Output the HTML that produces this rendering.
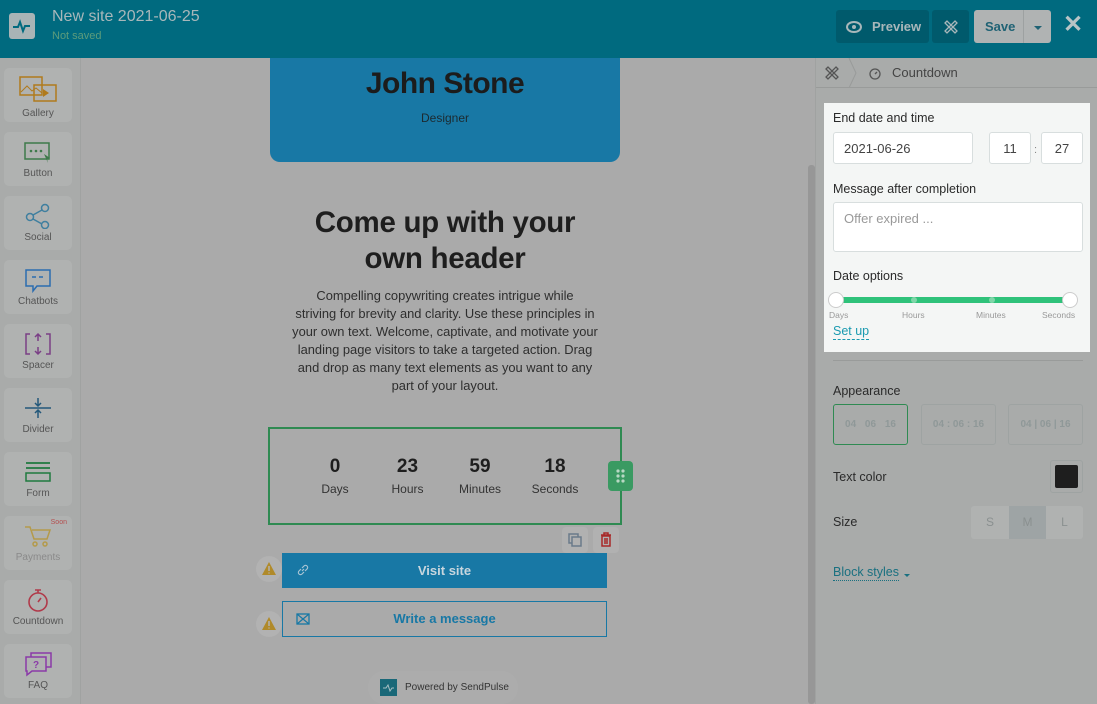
<!DOCTYPE html>
<html><head><meta charset="utf-8"><style>
*{box-sizing:border-box;margin:0;padding:0}
body{width:1097px;height:704px;overflow:hidden;background:#aaaaaa;font-family:"Liberation Sans",sans-serif;position:relative}
.abs{position:absolute}
.hdr{left:0;top:0;width:1097px;height:58px;background:#006a7f}
.side{left:0;top:58px;width:81px;height:646px;background:#a9abaa;border-right:1px solid #a0a2a1}
.item{position:absolute;left:4px;width:68px;height:54px;background:#b0b2b1;border-radius:5px;text-align:center;font-size:10px;color:#555}
.item svg{display:block;margin:7px auto 3px}
.rp{left:815px;top:58px;width:282px;height:646px;background:#a9abaa;border-left:1px solid #a0a2a1}
.lbl{font-size:12.5px;color:#2a2a2a}
.inp{position:absolute;background:#fff;border:1px solid #d8dede;border-radius:3px;font-size:13px;color:#444}
.btn{position:absolute;border-radius:3px}
</style></head><body>
<div class="abs hdr">
 <div class="abs" style="left:9px;top:13px;width:26px;height:26px;background:#a9b4b6;border-radius:3px"><svg width="26" height="26"><path d="M4 14h5l2-5 3 9 2-5h5" stroke="#006a7f" stroke-width="2" fill="none"/></svg></div>
 <div class="abs" style="left:52px;top:8px;font-size:16px;color:#a8b7ba">New site 2021-06-25</div>
 <div class="abs" style="left:52px;top:30px;font-size:11px;color:#5c9c7c">Not saved</div>
 <div class="btn" style="left:836px;top:10px;width:93px;height:33px;background:#005a6c"><svg class="abs" style="left:10px;top:11px" width="16" height="12"><ellipse cx="8" cy="6" rx="7" ry="5" fill="none" stroke="#a8b7ba" stroke-width="2"/><circle cx="8" cy="6" r="2" fill="#a8b7ba"/></svg><span class="abs" style="left:36px;top:9px;font-size:13px;font-weight:bold;color:#a8b7ba">Preview</span></div>
 <div class="btn" style="left:932px;top:10px;width:37px;height:33px;background:#005a6c"><svg class="abs" style="left:11px;top:9px" width="16" height="16"><path d="M2 4l2-2 10 10-2 2zM12 2l2 2-10 10-2-2z" fill="none" stroke="#a8b7ba" stroke-width="1.3"/></svg></div>
 <div class="btn" style="left:974px;top:10px;width:77px;height:33px;background:#b0b3b3"><span class="abs" style="left:11px;top:9px;font-size:13px;font-weight:bold;color:#1f6274">Save</span><div class="abs" style="left:49px;top:0;width:1px;height:33px;background:#9da1a1"></div><div class="abs" style="left:60px;top:16px;border:4px solid transparent;border-top:4px solid #1f6274;border-bottom:0"></div></div>
 <div class="abs" style="left:1063px;top:10px;font-size:24px;color:#b8c4c6;font-weight:bold">✕</div>
</div>
<div class="abs side">
 <div class="item" style="top:10px"><svg width="40" height="30"><rect x="2" y="2" width="22" height="18" fill="none" stroke="#b07a1c" stroke-width="1.5"/><path d="M3 17l6-6 5 5 4-3 6 5" stroke="#b07a1c" fill="none"/><rect x="16" y="10" width="22" height="16" fill="none" stroke="#b07a1c" stroke-width="1.5"/><path d="M25 14l6 4-6 4z" fill="#b07a1c"/></svg>Gallery</div>
 <div class="item" style="top:74px"><svg width="30" height="26"><rect x="2" y="4" width="24" height="16" fill="none" stroke="#3e7a4a" stroke-width="1.5"/><circle cx="8" cy="12" r="1.3" fill="#3e7a4a"/><circle cx="13" cy="12" r="1.3" fill="#3e7a4a"/><circle cx="18" cy="12" r="1.3" fill="#3e7a4a"/><path d="M21 15l6 4-3 1 1 4z" fill="#3e7a4a"/></svg>Button</div>
 <div class="item" style="top:138px"><svg width="30" height="26"><circle cx="7" cy="14" r="3.5" fill="none" stroke="#3f7f9f" stroke-width="1.5"/><circle cx="22" cy="5" r="3.5" fill="none" stroke="#3f7f9f" stroke-width="1.5"/><circle cx="22" cy="22" r="3.5" fill="none" stroke="#3f7f9f" stroke-width="1.5"/><path d="M10 12l9-5M10 16l9 5" stroke="#3f7f9f" stroke-width="1.5"/></svg>Social</div>
 <div class="item" style="top:202px"><svg width="30" height="26"><path d="M3 3h24v16H14l-4 5v-5H3z" fill="none" stroke="#2b6cb0" stroke-width="1.5"/><path d="M9 10h4M16 10h4" stroke="#2b6cb0" stroke-width="1.5"/></svg>Chatbots</div>
 <div class="item" style="top:266px"><svg width="30" height="26"><path d="M7 3H3v20h4M23 3h4v20h-4" fill="none" stroke="#7a3f86" stroke-width="1.5"/><path d="M15 3v7M15 16v7M12 6l3-3 3 3M12 20l3 3 3-3" stroke="#7a3f86" stroke-width="1.5" fill="none"/></svg>Spacer</div>
 <div class="item" style="top:330px"><svg width="30" height="26"><path d="M2 13h26" stroke="#23587a" stroke-width="1.5"/><path d="M15 3v8M15 15v8M12 8l3 3 3-3M12 18l3-3 3 3" stroke="#23587a" stroke-width="1.5" fill="none"/></svg>Divider</div>
 <div class="item" style="top:394px"><svg width="30" height="26"><path d="M3 4h24M3 9h24" stroke="#1f7a3f" stroke-width="1.8"/><rect x="3" y="14" width="24" height="8" fill="none" stroke="#1f7a3f" stroke-width="1.5"/></svg>Form</div>
 <div class="item" style="top:458px;color:#8a8a8a"><span class="abs" style="right:5px;top:3px;font-size:7px;color:#b45050">Soon</span><svg width="30" height="26"><path d="M2 4h5l4 12h13l3-9H9" fill="none" stroke="#b49a4a" stroke-width="1.5"/><circle cx="12" cy="21" r="2" fill="none" stroke="#b49a4a" stroke-width="1.5"/><circle cx="22" cy="21" r="2" fill="none" stroke="#b49a4a" stroke-width="1.5"/></svg>Payments</div>
 <div class="item" style="top:522px"><svg width="30" height="26"><circle cx="15" cy="15" r="9" fill="none" stroke="#b03a4a" stroke-width="1.6"/><path d="M12 3h6M15 3v3M15 15l3-4" stroke="#b03a4a" stroke-width="1.6"/></svg>Countdown</div>
 <div class="item" style="top:586px"><svg width="30" height="26"><rect x="8" y="2" width="20" height="14" fill="none" stroke="#8a3aa8" stroke-width="1.5"/><path d="M3 6h20v14H9l-5 4v-4H3z" fill="#b0b2b1" stroke="#8a3aa8" stroke-width="1.5"/><text x="10" y="17" font-size="10" font-weight="bold" fill="#8a3aa8">?</text></svg>FAQ</div>
</div>
<!-- canvas -->
<div class="abs" style="left:808px;top:165px;width:7px;height:539px;background:#979797;border-radius:3px"></div>
<div class="abs" style="left:270px;top:58px;width:350px;height:104px;background:#1878a5;border-radius:0 0 10px 10px;text-align:center">
 <div style="font-size:30px;font-weight:bold;color:#1c1c1c;margin-top:9px;letter-spacing:-0.5px">John Stone</div>
 <div style="font-size:12px;color:#1c2a30;margin-top:10px">Designer</div>
</div>
<div class="abs" style="left:250px;top:205px;width:390px;text-align:center;font-size:29.5px;font-weight:bold;color:#1e1e1e;line-height:36px;letter-spacing:-0.3px">Come up with your<br>own header</div>
<div class="abs" style="left:250px;top:287px;width:390px;text-align:center;font-size:12.9px;color:#2e2e2e;line-height:18px">Compelling copywriting creates intrigue while<br>striving for brevity and clarity. Use these principles in<br>your own text. Welcome, captivate, and motivate your<br>landing page visitors to take a targeted action. Drag<br>and drop as many text elements as you want to any<br>part of your layout.</div>
<div class="abs" style="left:268px;top:427px;width:354px;height:98px;border:2px solid #2f8a52"></div>
<div class="abs" style="left:300px;top:456px;width:300px;display:flex;text-align:center;color:#1e1e1e">
 <div style="width:70px"><div style="font-size:19px;font-weight:bold">0</div><div style="font-size:12px;margin-top:4px;color:#333">Days</div></div>
 <div style="width:75px"><div style="font-size:19px;font-weight:bold">23</div><div style="font-size:12px;margin-top:4px;color:#333">Hours</div></div>
 <div style="width:70px"><div style="font-size:19px;font-weight:bold">59</div><div style="font-size:12px;margin-top:4px;color:#333">Minutes</div></div>
 <div style="width:80px"><div style="font-size:19px;font-weight:bold">18</div><div style="font-size:12px;margin-top:4px;color:#333">Seconds</div></div>
</div>
<div class="abs" style="left:608px;top:461px;width:25px;height:30px;background:#3a9a62;border-radius:4px"><svg width="25" height="30"><g fill="#b8d8c4"><circle cx="10" cy="10" r="1.6"/><circle cx="15" cy="10" r="1.6"/><circle cx="10" cy="15" r="1.6"/><circle cx="15" cy="15" r="1.6"/><circle cx="10" cy="20" r="1.6"/><circle cx="15" cy="20" r="1.6"/></g></svg></div>
<div class="abs" style="left:562px;top:527px;width:26px;height:26px;background:#b1b1b1;border-radius:4px"><svg width="26" height="26"><rect x="7" y="7" width="9" height="9" fill="none" stroke="#6a7a8a" stroke-width="1.5"/><rect x="10" y="10" width="9" height="9" fill="#b1b1b1" stroke="#6a7a8a" stroke-width="1.5"/></svg></div>
<div class="abs" style="left:593px;top:527px;width:26px;height:26px;background:#b1b1b1;border-radius:4px"><svg width="26" height="26"><path d="M8 8h10M11 8V6h4v2M9 9h8v10H9zM12 11v6M14 11v6" stroke="#a82828" stroke-width="1.5" fill="none"/></svg></div>
<div class="abs" style="left:282px;top:553px;width:325px;height:35px;background:#1878a5;text-align:center;line-height:35px;font-size:13px;font-weight:bold;color:#c8d6de">Visit site</div>
<svg class="abs" style="left:296px;top:563px" width="14" height="14"><path d="M6 8l2-2M5 6L3 8a2 2 0 0 0 3 3l2-2M9 8l2-2a2 2 0 0 0-3-3L6 5" stroke="#a8c4d4" stroke-width="1.2" fill="none"/></svg>
<div class="abs" style="left:282px;top:601px;width:325px;height:36px;border:1px solid #1878a5;text-align:center;line-height:34px;font-size:13px;font-weight:bold;color:#1878a5">Write a message</div>
<svg class="abs" style="left:296px;top:613px" width="14" height="12"><rect x="1" y="1" width="12" height="10" fill="none" stroke="#1878a5" stroke-width="1.3"/><path d="M1 1l12 10M13 1L1 11" stroke="#1878a5" stroke-width="1.2"/></svg>
<div class="abs" style="left:256px;top:556px;width:26px;height:26px;border-radius:50%;background:#b2b2b2"><svg width="26" height="26"><path d="M13 6l7 13H6z" fill="#b08a2a"/><path d="M13 10v5M13 16.5v1" stroke="#b2b2b2" stroke-width="1.5"/></svg></div>
<div class="abs" style="left:256px;top:611px;width:26px;height:26px;border-radius:50%;background:#b2b2b2"><svg width="26" height="26"><path d="M13 6l7 13H6z" fill="#b08a2a"/><path d="M13 10v5M13 16.5v1" stroke="#b2b2b2" stroke-width="1.5"/></svg></div>
<div class="abs" style="left:368px;top:671px;width:150px;height:33px;background:#acacac;border-radius:16px"></div>
<div class="abs" style="left:380px;top:679px;width:17px;height:17px;background:#1a6878"><svg width="17" height="17"><path d="M3 9h3l2-3 2 6 2-3h2" stroke="#a8c0c4" fill="none"/></svg></div>
<div class="abs" style="left:405px;top:682px;font-size:10px;color:#333">Powered by SendPulse</div>
<!-- right panel -->
<div class="abs rp">
 <div class="abs" style="left:0;top:0;width:282px;height:30px;border-bottom:1px solid #999b9a"></div>
 <svg class="abs" style="left:8px;top:7px" width="16" height="16"><path d="M2 4l2-2 10 10-2 2zM12 2l2 2-10 10-2-2z" fill="none" stroke="#555" stroke-width="1.3"/></svg>
 <svg class="abs" style="left:32px;top:0" width="10" height="30"><path d="M1 0l7 15-7 15" stroke="#999b9a" fill="none"/></svg>
 <svg class="abs" style="left:52px;top:8px" width="14" height="14"><circle cx="7" cy="8" r="5" fill="none" stroke="#555" stroke-width="1.3"/><path d="M7 8l2-2" stroke="#555" stroke-width="1.3"/></svg>
 <div class="abs" style="left:76px;top:7px;font-size:13px;color:#444">Countdown</div>
 <div class="abs" style="left:8px;top:45px;width:266px;height:249px;background:#f4f6f5"></div>
 <div class="abs lbl" style="left:17px;top:53px">End date and time</div>
 <div class="inp" style="left:17px;top:74px;width:140px;height:32px;padding:8px 10px">2021-06-26</div>
 <div class="inp" style="left:173px;top:74px;width:42px;height:32px;padding:8px 0;text-align:center">11</div>
 <div class="abs" style="left:218px;top:86px;font-size:11px;color:#888">:</div>
 <div class="inp" style="left:225px;top:74px;width:42px;height:32px;padding:8px 0;text-align:center">27</div>
 <div class="abs lbl" style="left:17px;top:124px">Message after completion</div>
 <div class="inp" style="left:17px;top:144px;width:250px;height:50px;padding:8px 10px;color:#999">Offer expired ...</div>
 <div class="abs lbl" style="left:17px;top:211px">Date options</div>
 <div class="abs" style="left:20px;top:239px;width:236px;height:6px;background:#2fc27a"></div>
 <div class="abs" style="left:12px;top:234px;width:16px;height:16px;border-radius:50%;background:#fff;border:1px solid #ccc"></div>
 <div class="abs" style="left:246px;top:234px;width:16px;height:16px;border-radius:50%;background:#fff;border:1px solid #ccc"></div>
 <div class="abs" style="left:95px;top:239px;width:6px;height:6px;border-radius:50%;background:#7fd6a8"></div>
 <div class="abs" style="left:173px;top:239px;width:6px;height:6px;border-radius:50%;background:#7fd6a8"></div>
 <div class="abs" style="left:13px;top:252px;font-size:8.5px;color:#999">Days</div>
 <div class="abs" style="left:86px;top:252px;font-size:8.5px;color:#999">Hours</div>
 <div class="abs" style="left:160px;top:252px;font-size:8.5px;color:#999">Minutes</div>
 <div class="abs" style="left:226px;top:252px;font-size:8.5px;color:#999">Seconds</div>
 <div class="abs" style="left:17px;top:266px;font-size:12.5px;color:#1a9ab0;border-bottom:1px dashed #1a9ab0;line-height:15px">Set up</div>
 <div class="abs" style="left:17px;top:302px;width:250px;height:1px;background:#999b9a"></div>
 <div class="abs lbl" style="left:17px;top:326px">Appearance</div>
 <div class="abs" style="left:17px;top:346px;width:75px;height:41px;border:1px solid #2f8a52;border-radius:3px;text-align:center;line-height:39px;font-size:10px;font-weight:bold;color:#8f9898;word-spacing:6px">04 06 16</div>
 <div class="abs" style="left:105px;top:346px;width:75px;height:41px;border:1px solid #9ea3a2;border-radius:3px;text-align:center;line-height:39px;font-size:10px;font-weight:bold;color:#8f9898">04 : 06 : 16</div>
 <div class="abs" style="left:192px;top:346px;width:75px;height:41px;border:1px solid #9ea3a2;border-radius:3px;text-align:center;line-height:39px;font-size:10px;font-weight:bold;color:#8f9898">04 | 06 | 16</div>
 <div class="abs lbl" style="left:17px;top:412px">Text color</div>
 <div class="abs" style="left:234px;top:402px;width:33px;height:33px;border:1px solid #9ea3a2;border-radius:3px;padding:4px"><div style="width:23px;height:23px;background:#1e1e1e;border-radius:2px"></div></div>
 <div class="abs lbl" style="left:17px;top:457px">Size</div>
 <div class="abs" style="left:155px;top:448px;width:112px;height:33px;background:#b0b2b1;border-radius:3px;display:flex;font-size:12px;color:#8a9090;text-align:center;line-height:33px">
  <div style="width:38px">S</div><div style="width:37px;background:#9ea4a5">M</div><div style="width:37px">L</div></div>
 <div class="abs" style="left:17px;top:507px;font-size:12.5px;color:#1a7080;border-bottom:1px dotted #1a7080;line-height:15px">Block styles</div>
 <div class="abs" style="left:88px;top:516px;border:3px solid transparent;border-top:3px solid #1a7080;border-bottom:0"></div>
</div>
</body></html>
